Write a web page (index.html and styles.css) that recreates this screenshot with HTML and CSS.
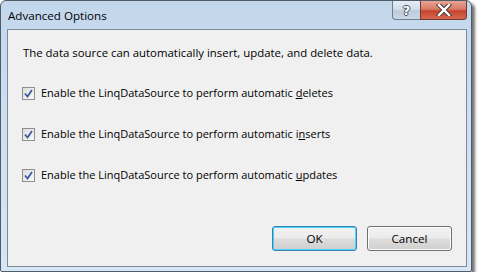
FILE: index.html
```html
<!DOCTYPE html>
<html lang="en">
<head>
    <meta charset="UTF-8">
    <title>Advanced Options</title>
    <link rel="stylesheet" href="styles.css">
</head>
<body>
    <div class="window">
        <div class="titlebar">
            <span class="title">Advanced Options</span>
            <div class="caption-buttons">
                <span class="cap-btn help">?</span>
                <span class="cap-btn close">
                    <svg width="16" height="12" viewBox="0 0 16 12">
                        <path d="M3 1 L13 11 M13 1 L3 11" stroke="#4a3a38" stroke-width="4.4" stroke-linecap="square" fill="none"/>
                        <path d="M3 1 L13 11 M13 1 L3 11" stroke="#fff" stroke-width="2.4" stroke-linecap="square" fill="none"/>
                    </svg>
                </span>
            </div>
        </div>
        <div class="client">
            <p class="intro">The data source can automatically insert, update, and delete data.</p>

            <div class="options">
                <label class="option">
                    <span class="checkbox">
                        <svg width="9" height="9" viewBox="0 0 9 9"><path d="M1 4.5 L3.5 7.5 L8 1" stroke="#3a5b9c" stroke-width="1.8" fill="none"/></svg>
                    </span>
                    <span>Enable the LinqDataSource to perform automatic <u>d</u>eletes</span>
                </label>
                <label class="option">
                    <span class="checkbox">
                        <svg width="9" height="9" viewBox="0 0 9 9"><path d="M1 4.5 L3.5 7.5 L8 1" stroke="#3a5b9c" stroke-width="1.8" fill="none"/></svg>
                    </span>
                    <span>Enable the LinqDataSource to perform automatic i<u>n</u>serts</span>
                </label>
                <label class="option">
                    <span class="checkbox">
                        <svg width="9" height="9" viewBox="0 0 9 9"><path d="M1 4.5 L3.5 7.5 L8 1" stroke="#3a5b9c" stroke-width="1.8" fill="none"/></svg>
                    </span>
                    <span>Enable the LinqDataSource to perform automatic <u>u</u>pdates</span>
                </label>
            </div>

            <div class="buttons">
                <button class="btn default">OK</button>
                <button class="btn">Cancel</button>
            </div>
        </div>
    </div>
</body>
</html>
```
FILE: styles.css
```css
* {
    margin: 0;
    padding: 0;
    box-sizing: border-box;
}

body {
    background: #fff;
    font-family: "Open Sans", "Noto Sans", sans-serif;
    font-size: 11.4px;
    color: #000;
}

/* Window frame */
.window {
    width: 472px;
    height: 272px;
    border: 1px solid #4f5b66;
    border-radius: 6px 6px 2px 2px;
    background: linear-gradient(to bottom, #c3d7ec 0%, #cfe0f2 50%, #d6e6f6 100%);
    box-shadow: 3px 3px 3px rgba(0, 0, 0, 0.55);
    display: flex;
    flex-direction: column;
}

.titlebar {
    height: 28px;
    display: flex;
    align-items: flex-start;
    padding-left: 7px;
}

.title {
    margin-top: 7px;
    font-size: 11.6px;
    line-height: 16px;
}

.caption-buttons {
    margin-left: auto;
    margin-right: 4px;
    display: flex;
}

.cap-btn {
    height: 19px;
    display: flex;
    align-items: center;
    justify-content: center;
    border: 1px solid #6b7d8f;
    border-top: none;
}

.help {
    width: 28px;
    border-radius: 0 0 0 4px;
    border-right: none;
    background: linear-gradient(to bottom, #e4edf6 0%, #d2dfec 45%, #bccbda 55%, #cbd9e6 100%);
    color: #fff;
    font-family: "DejaVu Sans", sans-serif;
    font-weight: bold;
    font-size: 13px;
    text-shadow: 1px 0 0 #4a545e, -1px 0 0 #4a545e, 0 1px 0 #4a545e, 0 -1px 0 #4a545e;
}

.close {
    width: 47px;
    border-radius: 0 0 4px 0;
    border-color: #6e3a32;
    background: linear-gradient(to bottom, #e8a494 0%, #d77b66 45%, #c7452e 55%, #d5674f 100%);
}

/* Client area */
.client {
    flex: 1;
    margin: 0 4px 4px 6px;
    border: 1px solid #7d8b98;
    background: #f0f0f0;
    display: flex;
    flex-direction: column;
    padding: 15px 14px 15px 14px;
}

.intro {
    line-height: 16px;
    padding-left: 1px;
}

.options {
    margin-top: 24px;
    display: flex;
    flex-direction: column;
    gap: 25px;
    font-size: 11px;
}

.option {
    display: flex;
    align-items: center;
    gap: 6px;
    line-height: 16px;
}

.checkbox {
    width: 13px;
    height: 13px;
    border: 1px solid #8f8f8f;
    background: linear-gradient(to bottom right, #dcdcdc, #fbfbfb);
    display: flex;
    align-items: center;
    justify-content: center;
}

.buttons {
    margin-top: auto;
    display: flex;
    justify-content: flex-end;
    gap: 10px;
}

.btn {
    width: 85px;
    height: 25px;
    font-family: inherit;
    font-size: 11.6px;
    border: 1px solid #707070;
    border-radius: 3px;
    background: linear-gradient(to bottom, #f2f2f2 0%, #ebebeb 48%, #dddddd 52%, #cfcfcf 100%);
    box-shadow: inset 0 0 0 1px #fcfcfc;
}

.btn.default {
    border-color: #3c7fb1;
    box-shadow: inset 0 0 0 1px #48d5fc;
}
```
